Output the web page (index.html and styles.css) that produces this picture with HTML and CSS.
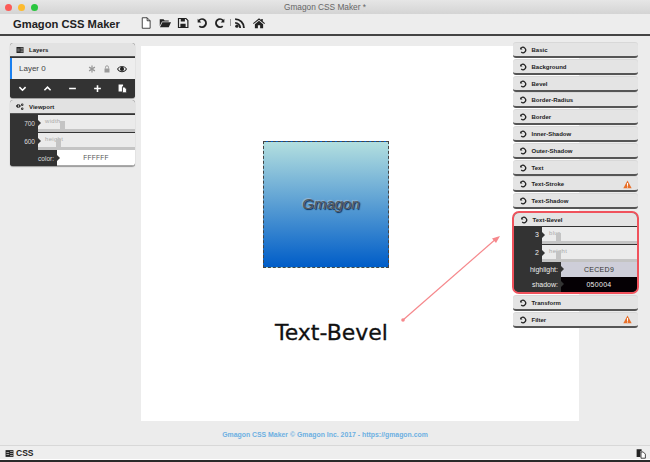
FILE: index.html
```html
<!DOCTYPE html>
<html lang="en">
<head>
<meta charset="utf-8">
<title>Gmagon CSS Maker</title>
<link rel="stylesheet" href="styles.css">
</head>
<body>
<svg class="defs" width="0" height="0">
  <symbol id="undo" viewBox="0 0 16 16"><path d="M2.200 2.400v4.800h4.800L5 5.100a4.100 4.100 0 1 1 .2 6.100l-1.600 1.900A6.600 6.600 0 1 0 3.300 3.500z"/></symbol>
  <symbol id="warn" viewBox="0 0 16 16"><path d="M8 1l7.400 13.600H.6z" fill="#e8702a"/><path d="M7 5.500h2l-.3 5H7.300zM7.100 11.400h1.800v1.800H7.100z" fill="#fff"/></symbol>
  <symbol id="copy" viewBox="0 0 16 16"><path d="M1 1h8v3.500H7v9H1z"/><path d="M8 5.500h3.500L15 9v6.500H8z" fill="#fff" stroke="currentColor" stroke-width="1.300"/></symbol>
  <symbol id="lines" viewBox="0 0 16 16"><path d="M1 2h14v12H1z"/><path d="M9 4.500h5M9 8h5M9 11.500h5M2.500 6.200h5M2.500 9.800h5" stroke="#fff" stroke-width="1"/></symbol>
</svg>
<header class="titlebar">
  <span class="dot dot-red"></span><span class="dot dot-yellow"></span><span class="dot dot-green"></span>
  <span class="window-title">Gmagon CSS Maker *</span>
</header>
<nav class="toolbar">
  <span class="app-name">Gmagon CSS Maker</span>
  <div class="tools">
    <svg class="tool" viewBox="0 0 16 16"><path d="M3 1h6.500L13.500 5v10H3z" fill="#fff" stroke="#222" stroke-width="1.100"/><path d="M9.500 1v4h4" fill="none" stroke="#222" stroke-width="1.100"/></svg>
    <svg class="tool tool-folder" viewBox="0 0 16 16"><path d="M1 3h5l1.500 1.500H13V6H4L1 12z"/><path d="M4.500 7H16l-3 6.500H1.300z"/></svg>
    <svg class="tool tool-save" viewBox="0 0 16 16"><path d="M2 2h10l2.500 2.500V14H2z" fill="none" stroke="#222" stroke-width="1.600"/><path d="M5 2.500h5.500v3.500H5zM4.500 9h7v4.500h-7z"/></svg>
    <svg class="tool tool-undo"><use href="#undo"/></svg>
    <svg class="tool tool-redo"><use href="#undo"/></svg>
    <span class="tool-sep"></span>
    <svg class="tool tool-rss" viewBox="0 0 16 16"><circle cx="3.800" cy="12.200" r="2.200"/><path d="M1.500 6.500a8 8 0 0 1 8 8H7a5.500 5.500 0 0 0-5.500-5.500zM1.500 1.500a13 13 0 0 1 13 13H12A10.500 10.500 0 0 0 1.500 4z"/></svg>
    <svg class="tool tool-home" viewBox="0 0 16 16"><path d="M8 1.500l3 2.600V2.500h2v3.300l3 2.600-.9 1L8 3.500 .9 9.400 0 8.400z"/><path d="M2.500 9.500L8 5l5.500 4.500V15H9.500v-4h-3v4h-4z"/></svg>
  </div>
</nav>
<div class="main">
  <aside class="left">
    <section class="panel">
      <h2 class="panel-head"><svg class="head-icon"><use href="#lines"/></svg>Layers</h2>
      <div class="layer">
        <span class="layer-name">Layer 0</span>
        <span class="layer-icons">
          <svg class="layer-icon" viewBox="0 0 16 16"><path d="M6.600 1h2.800l-.3 4.700 4-2.500 1.400 2.400L10.300 8l4.200 2.400-1.400 2.400-4-2.500.3 4.700H6.600l.3-4.700-4 2.500-1.400-2.400L5.700 8 1.500 5.600l1.400-2.400 4 2.500z" fill="#999"/></svg>
          <svg class="layer-icon" viewBox="0 0 16 16"><path d="M3 7h10v8H3z" fill="#999"/><path d="M5 7V4.500a3 3 0 0 1 6 0V7" fill="none" stroke="#999" stroke-width="1.800"/></svg>
          <svg class="layer-icon layer-eye" viewBox="0 0 16 16"><path d="M0 8c2-3.500 5-5 8-5s6 1.500 8 5c-2 3.500-5 5-8 5s-6-1.500-8-5z" fill="#222"/><path d="M1.800 8C3.300 5.600 5.500 4.400 8 4.400s4.700 1.200 6.200 3.600c-1.500 2.400-3.700 3.600-6.200 3.600S3.300 10.400 1.800 8z" fill="#eee"/><circle cx="8" cy="7.800" r="3.300" fill="#222"/></svg>
        </span>
      </div>
      <div class="layer-actions">
        <svg class="action" viewBox="0 0 16 16"><path d="M2.500 5.500L8 11l5.500-5.500" fill="none" stroke="#fff" stroke-width="2.800"/></svg>
        <svg class="action" viewBox="0 0 16 16"><path d="M2.500 11L8 5.500 13.500 11" fill="none" stroke="#fff" stroke-width="2.800"/></svg>
        <svg class="action" viewBox="0 0 16 16"><path d="M2 6.600h12v2.800H2z" fill="#fff"/></svg>
        <svg class="action" viewBox="0 0 16 16"><path d="M6.600 2h2.800v4.600H14v2.800H9.400V14H6.600V9.400H2V6.600h4.600z" fill="#fff"/></svg>
        <svg class="action action-copy"><use href="#copy"/></svg>
      </div>
    </section>
    <section class="panel">
      <h2 class="panel-head"><svg class="head-icon" viewBox="0 0 16 16"><path d="M6 2.500l1 .3.800 1.400 1.400.4v2.800l-1.400.4-.8 1.400-1 .3-1.500-.5-1.500.5-1-.3L1.600 7.800.4 7.400V4.600l1.200-.4.800-1.400 1-.3 1.500.5z"/><circle cx="5" cy="6" r="1.500" fill="#eee"/><circle cx="12.500" cy="3.500" r="2.400"/><circle cx="12.500" cy="11.500" r="2.400"/><circle cx="12.500" cy="3.500" r=".8" fill="#eee"/><circle cx="12.500" cy="11.500" r=".8" fill="#eee"/></svg>Viewport</h2>
      <div class="control">
        <span class="control-value control-narrow">700</span>
        <span class="slider"><span class="slider-label">width</span><span class="thumb thumb-width"></span></span>
      </div>
      <div class="control">
        <span class="control-value control-narrow">600</span>
        <span class="slider"><span class="slider-label">height</span><span class="thumb thumb-height"></span></span>
      </div>
      <div class="control control-color">
        <span class="control-value control-wide">color:</span>
        <span class="swatch swatch-white">FFFFFF</span>
      </div>
    </section>
  </aside>
  <main class="canvas">
    <div class="preview"><span class="preview-text">Gmagon</span></div>
  </main>
  <aside class="right">
    <div class="row"><svg class="row-icon"><use href="#undo"/></svg>Basic</div>
    <div class="row"><svg class="row-icon"><use href="#undo"/></svg>Background</div>
    <div class="row"><svg class="row-icon"><use href="#undo"/></svg>Bevel</div>
    <div class="row"><svg class="row-icon"><use href="#undo"/></svg>Border-Radius</div>
    <div class="row"><svg class="row-icon"><use href="#undo"/></svg>Border</div>
    <div class="row"><svg class="row-icon"><use href="#undo"/></svg>Inner-Shadow</div>
    <div class="row"><svg class="row-icon"><use href="#undo"/></svg>Outer-Shadow</div>
    <div class="row"><svg class="row-icon"><use href="#undo"/></svg>Text</div>
    <div class="row"><svg class="row-icon"><use href="#undo"/></svg>Text-Stroke<svg class="row-warn"><use href="#warn"/></svg></div>
    <div class="row"><svg class="row-icon"><use href="#undo"/></svg>Text-Shadow</div>
    <section class="open-panel">
      <div class="row row-open"><svg class="row-icon"><use href="#undo"/></svg>Text-Bevel</div>
      <div class="control">
        <span class="control-value control-narrow-right">3</span>
        <span class="slider"><span class="slider-label">blur</span><span class="thumb thumb-blur"></span></span>
      </div>
      <div class="control">
        <span class="control-value control-narrow-right">2</span>
        <span class="slider"><span class="slider-label">height</span><span class="thumb thumb-bevel"></span></span>
      </div>
      <div class="control control-color">
        <span class="control-value control-wide-right">highlight:</span>
        <span class="swatch swatch-light">CECED9</span>
      </div>
      <div class="control control-color">
        <span class="control-value control-wide-right">shadow:</span>
        <span class="swatch swatch-black">050004</span>
      </div>
    </section>
    <div class="row"><svg class="row-icon"><use href="#undo"/></svg>Transform</div>
    <div class="row"><svg class="row-icon"><use href="#undo"/></svg>Filter<svg class="row-warn"><use href="#warn"/></svg></div>
  </aside>
</div>
<footer class="credit">Gmagon CSS Maker © Gmagon Inc. 2017 - https://gmagon.com</footer>
<div class="statusbar">
  <svg class="status-icon"><use href="#lines"/></svg><span class="status-label">CSS</span>
  <svg class="status-copy"><use href="#copy"/></svg>
</div>
<div class="bottom-strip"></div>
<div class="annotation">
  <svg class="arrow" width="650" height="462" viewBox="0 0 650 462"><path d="M403 320L497 238" stroke="#f6888c" stroke-width="1.200" fill="none"/><path d="M500 236l-8 2.500 4 4.500z" fill="#f6888c"/><circle cx="403" cy="320" r="1.800" fill="#f6888c"/></svg>
  <span class="annotation-text">Text-Bevel</span>
</div>
</body>
</html>
```

FILE: styles.css
```css
* { box-sizing: border-box; }
html, body { margin: 0; height: 462px; overflow: hidden; }
body {
  position: relative;
  display: flex;
  flex-direction: column;
  width: 650px;
  background: #ececec;
  font-family: "Liberation Sans", Arial, sans-serif;
  color: #222;
}
.defs { position: absolute; }

.titlebar {
  position: relative;
  display: flex;
  align-items: center;
  gap: 6px;
  height: 14px;
  padding-left: 5px;
  background: linear-gradient(#e6e6e6, #d4d4d4);
}
.dot { width: 7px; height: 7px; border-radius: 50%; }
.dot-red { background: #fc5b57; }
.dot-yellow { background: #fdbb2e; }
.dot-green { background: #2ac63f; }
.window-title {
  position: absolute;
  left: 0;
  right: 0;
  text-align: center;
  font-size: 8.300px;
  color: #666;
}

.toolbar {
  display: flex;
  align-items: center;
  height: 22px;
  padding-left: 13px;
  background: #ededed;
  border-bottom: 2px solid #444;
}
.app-name { width: 127px; font-size: 11.200px; font-weight: bold; color: #222; }
.tools { display: flex; align-items: center; gap: 6.500px; margin-top: -3px; }
.tool { width: 12px; height: 12px; fill: #222; }
.tool-redo { transform: scaleX(-1); }
.tool-sep { width: 1px; height: 7px; margin: 0 -3px; background: #999; }

.main {
  display: flex;
  align-items: flex-start;
  gap: 6px;
  height: 385px;
  padding: 7px 0 0 10px;
}
.left { display: flex; flex-direction: column; gap: 2px; flex: none; width: 125px; }
.panel {
  border-radius: 3px;
  overflow: hidden;
  background: #333;
  box-shadow: 0 1px 1px #999;
}
.panel-head {
  display: flex;
  align-items: center;
  gap: 5px;
  height: 14px;
  margin: 0;
  padding-left: 6px;
  border-bottom: 1px solid #555;
  background: #e2e2e2;
  font-size: 6px;
  font-weight: bold;
  color: #222;
}
.head-icon { width: 8px; height: 8px; fill: #222; }
.layer {
  display: flex;
  align-items: center;
  justify-content: space-between;
  height: 21px;
  margin-top: 1px;
  padding: 0 8px 0 7px;
  border-left: 2px solid #1a80f0;
  background: #eeeeee;
}
.layer-name { font-size: 8px; color: #444; white-space: nowrap; }
.layer-icons { display: flex; gap: 7px; align-items: center; }
.layer-icon { width: 8px; height: 8px; }
.layer-eye { width: 10px; height: 10px; margin-left: -1px; }
.layer-actions {
  display: flex;
  align-items: center;
  justify-content: space-between;
  height: 19px;
  padding: 0 8px 0 8px;
  background: #333;
}
.action { width: 9px; height: 9px; }
.action-copy { color: #333; fill: #fff; }

.control { display: flex; height: 18px; background: #333; }
.control-value {
  display: flex;
  align-items: center;
  justify-content: flex-end;
  position: relative;
  flex: none;
  padding-right: 3px;
  font-size: 6.500px;
  color: #ddd;
}
.control-value::after {
  content: "";
  position: absolute;
  right: -3px;
  top: 50%;
  margin-top: -3px;
  border-left: 3px solid #333;
  border-top: 3px solid transparent;
  border-bottom: 3px solid transparent;
  z-index: 1;
}
.control-narrow { width: 28px; }
.control-wide { width: 47px; }
.control-narrow-right { width: 28px; font-size: 7px; color: #eee; }
.control-wide-right { width: 47px; font-size: 7px; color: #eee; }
.slider {
  position: relative;
  flex: 1;
  display: flex;
  align-items: center;
  padding: 0 0 2px 7px;
  margin-top: 1px;
  background: #ebebeb;
  border-bottom: 3px solid #c4c4c4;
}
.slider-label { font-size: 6px; color: #aaa; letter-spacing: .3px; }
.thumb { position: absolute; top: 6px; width: 5px; height: 8px; background: #c4c4c4; }
.thumb-width { left: 22px; }
.thumb-height { left: 18px; }
.thumb-blur { left: 14px; }
.thumb-bevel { left: 14px; }

.control-color { height: 16px; }
.open-panel .control-color { height: 15px; }
.swatch {
  flex: 1;
  display: flex;
  align-items: center;
  justify-content: center;
  font-size: 6.500px;
  letter-spacing: .3px;
}
.swatch-white { background: #fff; color: #555; border-bottom: 1px solid #aaa; }
.swatch-light { background: #ceced9; color: #333; font-size: 7px; }
.swatch-black { background: #050004; color: #eee; font-size: 7px; }

.canvas {
  display: flex;
  justify-content: flex-start;
  align-items: flex-start;
  flex: none;
  width: 438px;
  height: 375px;
  margin-top: 3px;
  padding: 95px 0 0 122px;
  background: #fff;
}
.preview {
  display: flex;
  align-items: center;
  justify-content: center;
  width: 126px;
  height: 127px;
  border: 1px dashed #444;
  background: linear-gradient(#b3dfdf, #005dc8);
}
.preview-text {
  font-size: 15px;
  font-style: italic;
  color: #5a5a5a;
  text-shadow: 1px 1px 1px #0a2a55, -1px -1px 1px rgba(206, 206, 217, .5);
  margin: -2px 0 0 10px;
}

.right {
  position: relative;
  display: flex;
  flex-direction: column;
  gap: 1.800px;
  flex: none;
  width: 125px;
  margin-left: -72px;
}
.row {
  display: flex;
  align-items: center;
  gap: 4.500px;
  height: 15px;
  padding: 1px 6px 0 6px;
  border-radius: 3px;
  background: #e4e4e4;
  border-bottom: 2px solid #555;
  box-shadow: 0 -1px 0 #d8d8d8;
  font-size: 6px;
  font-weight: bold;
  color: #222;
}
.row-icon { width: 8px; height: 8px; fill: #222; flex: none; }
.row-warn { width: 9px; height: 9px; margin-left: auto; margin-right: 0; }
.open-panel {
  margin: 0 -1px;
  border: 2px solid #f0525c;
  border-radius: 7px;
  overflow: hidden;
  background: #333;
}
.row-open { height: 13px; border-radius: 0; box-shadow: none; border-bottom-width: 0; }

.credit {
  height: 24px;
  padding-top: 10px;
  text-align: center;
  font-size: 6.900px;
  font-weight: bold;
  color: #6db0e2;
}
.statusbar {
  display: flex;
  align-items: center;
  gap: 2px;
  height: 15px;
  padding: 1px 4px 0 5px;
  border-top: 1px solid #d8d8d8;
  border-bottom: 1px solid #fff;
  background: #eeeeee;
}
.status-icon { width: 9px; height: 9px; fill: #222; }
.status-label { font-size: 8.500px; font-weight: bold; color: #222; }
.status-copy { width: 10px; height: 11px; margin-left: auto; color: #222; fill: #222; }
.bottom-strip { height: 2px; background: #2a2a2a; }

.annotation { position: absolute; inset: 0; pointer-events: none; }
.arrow { position: absolute; left: 0; top: 0; }
.annotation-text {
  position: absolute;
  left: 275px;
  top: 320px;
  font-family: "DejaVu Sans", sans-serif;
  font-size: 22px;
  color: #111;
  -webkit-text-stroke: .3px #111;
}
```
